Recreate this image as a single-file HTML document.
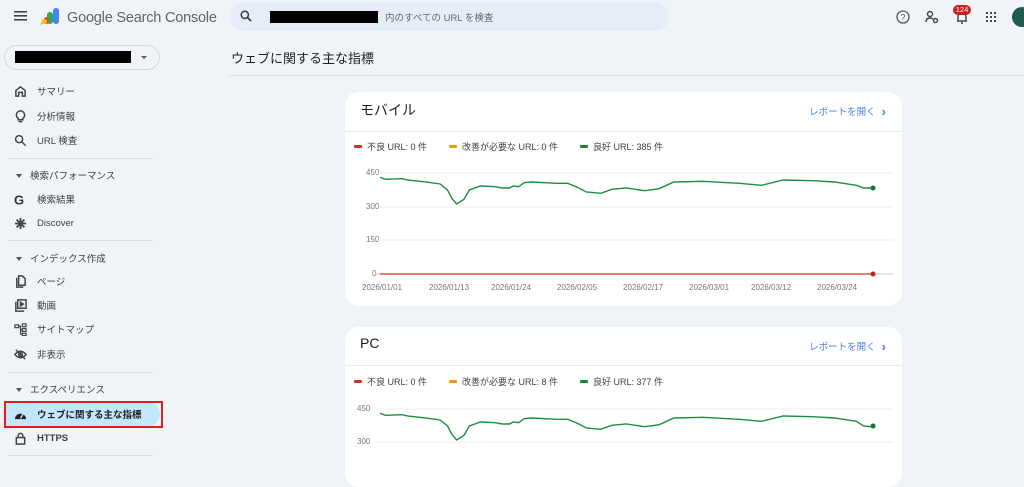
<!DOCTYPE html>
<html><head><meta charset="utf-8"><style>
*{box-sizing:border-box;margin:0;padding:0}
body{width:1024px;height:463px;overflow:hidden;background:#f0f4f9;font-family:"Liberation Sans","Noto Sans CJK JP",sans-serif;color:#1f1f1f;position:relative}
.abs{position:absolute}
.item{position:absolute;left:14px;height:20px;display:flex;align-items:center;font-size:9.5px;color:#3c4043}
.item svg{width:13px;height:13px;margin-right:10px;fill:none;stroke:#444;stroke-width:1.6}
.sec{position:absolute;left:16px;font-size:9.5px;color:#3c4043;display:flex;align-items:center}
.sec:before{content:"";border:3px solid transparent;border-top:4px solid #555;margin-right:8px;margin-top:4px}
.hr{position:absolute;left:8px;width:145px;height:1px;background:#dadce0}
.card{position:absolute;left:345px;width:557px;background:#fff;border-radius:14px}
.ctitle{position:absolute;left:15px;top:8px;font-size:14px;color:#1f1f1f}
.link{position:absolute;right:16px;top:12px;font-size:9.5px;color:#4a7fe0}
.link b{font-size:13px;font-weight:bold;margin-left:6px;vertical-align:-1px}
.legend{position:absolute;top:48px;left:9px;font-size:9px;color:#3c4043;display:flex}
.legend span{display:flex;align-items:center;margin-right:22px}
.legend i{display:inline-block;width:8px;height:3px;margin-right:5px;border-radius:1px}
.yl{position:absolute;font-size:8px;color:#777}
.xl{position:absolute;font-size:8px;color:#777;top:191px}
</style></head><body>
<svg class="abs" style="left:14px;top:11px" width="13" height="10"><rect y="0" width="13" height="1.6" fill="#444"/><rect y="4" width="13" height="1.6" fill="#444"/><rect y="8" width="13" height="1.6" fill="#444"/></svg>
<svg class="abs" style="left:39px;top:7px" width="22" height="20" viewBox="0 0 22 20">
<rect x="14" y="1" width="6" height="16" rx="3" fill="#4285f4"/>
<rect x="8" y="5" width="6" height="12" rx="3" fill="#34a853"/>
<rect x="5" y="10" width="5" height="7" rx="2.5" fill="#ea4335"/>
<path d="M1 18 L4 12 L8 15 Z" fill="#fbbc04"/><rect x="3" y="12" width="5" height="5" rx="2.5" fill="#fbbc04"/>
</svg>
<div class="abs" style="left:67px;top:10px;font-size:14.5px;color:#5f6368;letter-spacing:-0.2px">Google Search Console</div>
<div class="abs" style="left:230px;top:2px;width:439px;height:29px;border-radius:15px;background:#e6edf9"></div>
<svg class="abs" style="left:240px;top:10px" width="12" height="12" viewBox="0 0 12 12"><circle cx="4.8" cy="4.8" r="3.6" fill="none" stroke="#444" stroke-width="1.6"/><path d="M7.5 7.5 L11 11" stroke="#444" stroke-width="1.8"/></svg>
<div class="abs" style="left:270px;top:11px;width:108px;height:12px;background:#000"></div>
<div class="abs" style="left:385px;top:10px;font-size:9.5px;color:#666">内のすべての URL を検査</div>
<svg class="abs" style="left:896px;top:10px" width="14" height="14" viewBox="0 0 14 14"><circle cx="7" cy="7" r="6" fill="none" stroke="#555" stroke-width="1.3"/><text x="7" y="10.5" font-size="9" text-anchor="middle" fill="#555" font-family="Liberation Sans">?</text></svg>
<svg class="abs" style="left:925px;top:10px" width="14" height="14" viewBox="0 0 14 14"><circle cx="5" cy="4" r="2.5" fill="none" stroke="#444" stroke-width="1.4"/><path d="M1 12 Q1 8 5 8 Q7 8 8 9" fill="none" stroke="#444" stroke-width="1.4"/><circle cx="10.5" cy="10.5" r="2" fill="none" stroke="#444" stroke-width="1.4"/></svg>
<svg class="abs" style="left:955px;top:11px" width="14" height="14" viewBox="0 0 14 14"><path d="M3 10 V6 Q3 2 7 2 Q11 2 11 6 V10 Z M2 10 H12 M6 12 H8" fill="none" stroke="#444" stroke-width="1.4"/></svg>
<div class="abs" style="left:953px;top:5px;width:18px;height:10px;border-radius:5px;background:#c5221f;color:#fff;font-size:7.5px;text-align:center;line-height:10px">124</div>
<svg class="abs" style="left:986px;top:12px" width="10" height="10"><g fill="#444"><rect x="0" y="0" width="2" height="2"/><rect x="4" y="0" width="2" height="2"/><rect x="8" y="0" width="2" height="2"/><rect x="0" y="4" width="2" height="2"/><rect x="4" y="4" width="2" height="2"/><rect x="8" y="4" width="2" height="2"/><rect x="0" y="8" width="2" height="2"/><rect x="4" y="8" width="2" height="2"/><rect x="8" y="8" width="2" height="2"/></g></svg>
<div class="abs" style="left:1012px;top:7px;width:20px;height:20px;border-radius:50%;background:#1e5c52"></div>

<div class="abs" style="left:4px;top:45px;width:156px;height:25px;border:1px solid #d5d9de;border-radius:13px"></div>
<div class="abs" style="left:15px;top:51px;width:116px;height:12px;background:#000"></div>
<div class="abs" style="left:141px;top:56px;border:3px solid transparent;border-top:3.5px solid #555"></div>

<div class="item" style="top:81px"><svg viewBox="0 0 14 14"><path d="M2 6 L7 2 L12 6 V12 H9 V8 H5 V12 H2 Z"/></svg>サマリー</div>
<div class="item" style="top:106px"><svg viewBox="0 0 14 14"><path d="M4.5 9 Q2.5 7.5 2.5 5.5 A4.5 4.5 0 0 1 11.5 5.5 Q11.5 7.5 9.5 9 V10.5 H4.5 Z M5 12.5 H9"/></svg>分析情報</div>
<div class="item" style="top:130px"><svg viewBox="0 0 14 14"><circle cx="5.5" cy="5.5" r="3.8"/><path d="M8.5 8.5 L12.5 12.5"/></svg>URL 検査</div>
<div class="hr" style="top:158px"></div>
<div class="sec" style="top:168px">検索パフォーマンス</div>
<div class="item" style="top:189px"><svg viewBox="0 0 14 14" style="stroke:none"><text x="0" y="12.5" font-size="14" font-weight="bold" fill="#333" font-family="Liberation Sans">G</text></svg>検索結果</div>
<div class="item" style="top:213px"><svg viewBox="0 0 14 14"><path d="M7 1 V13 M1 7 H13 M2.8 2.8 L11.2 11.2 M11.2 2.8 L2.8 11.2" stroke-width="2"/></svg>Discover</div>
<div class="hr" style="top:240px"></div>
<div class="sec" style="top:251px">インデックス作成</div>
<div class="item" style="top:271px"><svg viewBox="0 0 14 14"><path d="M3 3 V13 H10 M5 1 H9 L12 4 V11 H5 Z"/></svg>ページ</div>
<div class="item" style="top:295px"><svg viewBox="0 0 14 14"><path d="M2 3 V13 H11 M4 1 H13 V10 H4 Z"/><path d="M7 3.5 L10 5.5 L7 7.5 Z" fill="#444"/></svg>動画</div>
<div class="item" style="top:319px"><svg viewBox="0 0 14 14" style="stroke-width:1.3"><rect x="1" y="2" width="4" height="3"/><rect x="9" y="1" width="4" height="3"/><rect x="9" y="6" width="4" height="3"/><rect x="9" y="11" width="4" height="2.5"/><path d="M5 3.5 H7 V12 H9 M7 7.5 H9"/></svg>サイトマップ</div>
<div class="item" style="top:344px"><svg viewBox="0 0 14 14"><path d="M1 7 Q7 0 13 7 Q7 14 1 7 Z"/><circle cx="7" cy="7" r="2"/><path d="M2 2 L12 12"/></svg>非表示</div>
<div class="hr" style="top:372px"></div>
<div class="sec" style="top:382px">エクスペリエンス</div>
<div class="abs" style="left:4px;top:401px;width:156px;height:26px;border-radius:0 13px 13px 0;background:#c2e7ff"></div>
<div class="abs" style="left:4px;top:401px;width:159px;height:27px;border:2px solid #e0201e"></div>
<div class="item" style="top:404px;font-weight:bold;color:#1f1f1f"><svg viewBox="0 0 14 14" style="stroke:none"><path d="M1 12 A6 6 0 0 1 13 12 Z" fill="#222"/><path d="M7 11 L10 6" stroke="#c2e7ff" stroke-width="1.5"/></svg>ウェブに関する主な指標</div>
<div class="item" style="top:428px;font-weight:bold"><svg viewBox="0 0 14 14"><rect x="2.5" y="6" width="9" height="7"/><path d="M4.5 6 V4 A2.5 2.5 0 0 1 9.5 4 V6"/></svg>HTTPS</div>
<div class="hr" style="top:455px"></div>

<div class="abs" style="left:231px;top:48px;font-size:13px;color:#1f1f1f">ウェブに関する主な指標</div>
<div class="abs" style="left:229px;top:75px;width:795px;height:1px;background:#dadce0"></div>

<div class="card" style="top:92px;height:214px">
<div class="ctitle">モバイル</div><div class="link">レポートを開く<b>›</b></div>
<div class="abs" style="left:0;top:39px;width:557px;height:1px;background:#e8eaed"></div>
<div class="legend"><span><i style="background:#d93025"></i>不良 URL: 0 件</span><span><i style="background:#f29900"></i>改善が必要な URL: 0 件</span><span><i style="background:#188038"></i>良好 URL: 385 件</span></div>
<div class="yl" style="left:21px;top:76px">450</div><div class="yl" style="left:21px;top:110px">300</div><div class="yl" style="left:21px;top:143px">150</div><div class="yl" style="left:27px;top:177px">0</div>
<div class="xl" style="left:17px">2026/01/01</div><div class="xl" style="left:84px">2026/01/13</div><div class="xl" style="left:146px">2026/01/24</div><div class="xl" style="left:212px">2026/02/05</div><div class="xl" style="left:278px">2026/02/17</div><div class="xl" style="left:344px">2026/03/01</div><div class="xl" style="left:406px">2026/03/12</div><div class="xl" style="left:472px">2026/03/24</div>
</div>

<div class="card" style="top:327px;height:160px">
<div class="ctitle">PC</div><div class="link">レポートを開く<b>›</b></div>
<div class="abs" style="left:0;top:38px;width:557px;height:1px;background:#e8eaed"></div>
<div class="legend"><span><i style="background:#d93025"></i>不良 URL: 0 件</span><span><i style="background:#f29900"></i>改善が必要な URL: 8 件</span><span><i style="background:#188038"></i>良好 URL: 377 件</span></div>
<div class="yl" style="left:12px;top:77px">450</div><div class="yl" style="left:12px;top:110px">300</div>
</div>

<svg class="abs" style="left:0;top:0" width="1024" height="463">
<g stroke="#eeeeee" stroke-width="1">
<line x1="375" y1="173" x2="893" y2="173"/><line x1="375" y1="207" x2="893" y2="207"/><line x1="375" y1="240" x2="893" y2="240"/>
<line x1="375" y1="409" x2="893" y2="409"/><line x1="375" y1="442" x2="893" y2="442"/>
</g>
<line x1="375" y1="274" x2="893" y2="274" stroke="#ccc"/>
<line x1="380" y1="274" x2="873" y2="274" stroke="#e06c5c" stroke-width="1.8"/>
<circle cx="873" cy="274" r="2.5" fill="#c5221f"/>
<g transform="translate(338,90) scale(0.365,0.3333)">
<polyline fill="none" stroke="#1e8e3e" stroke-width="1.4" vector-effect="non-scaling-stroke" points="115,262 130,268 175,266 190,270 240,276 280,282 300,300 312,325 325,342 345,328 360,300 390,288 430,290 450,294 470,294 480,288 495,290 510,278 530,276 600,280 630,280 660,294 680,306 720,310 750,298 790,294 840,302 880,296 900,286 920,276 1000,274 1100,280 1160,286 1220,270 1300,272 1360,276 1420,286 1440,294 1465,294"/>
</g>
<circle cx="873" cy="188" r="2.5" fill="#137333"/>
<g transform="translate(0,236)"><g transform="translate(338,90) scale(0.365,0.3333)">
<polyline fill="none" stroke="#1e8e3e" stroke-width="1.4" vector-effect="non-scaling-stroke" points="115,262 130,268 175,266 190,270 240,276 280,282 300,300 312,325 325,342 345,328 360,300 390,288 430,290 450,294 470,294 480,288 495,290 510,278 530,276 600,280 630,280 660,294 680,306 720,310 750,298 790,294 840,302 880,296 900,286 920,276 1000,274 1100,280 1160,286 1220,270 1300,272 1360,276 1420,286 1440,300 1465,302"/>
</g></g>
<circle cx="873" cy="426" r="2.5" fill="#137333"/>
</svg>
</body></html>
